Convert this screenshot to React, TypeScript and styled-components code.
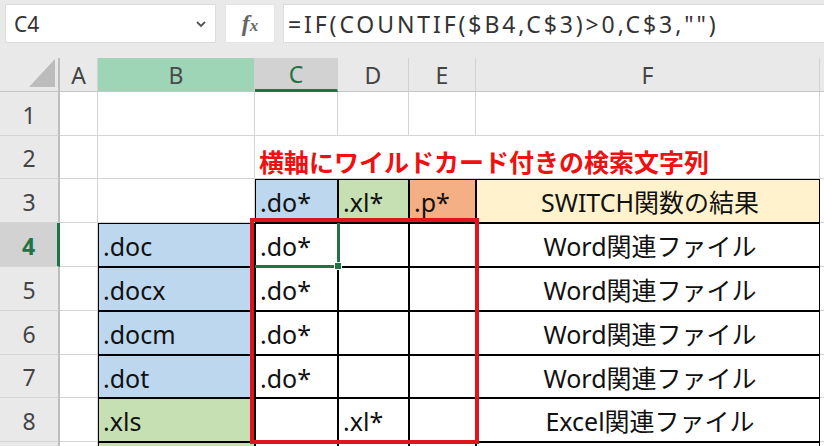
import React from 'react';
import styled, { createGlobalStyle, css } from 'styled-components';

const GlobalStyle = createGlobalStyle`
  html, body {
    margin: 0;
    padding: 0;
    background: #ffffff;
  }
  body {
    font-family: 'Noto Sans', 'Noto Sans CJK JP', sans-serif;
  }
`;

const GREEN = '#217346';

const Page = styled.div`
  width: 824px;
  height: 446px;
  overflow: hidden;
  background: #fff;
`;

const FormulaBar = styled.div`
  display: flex;
  align-items: flex-start;
  gap: 9px;
  height: 58px;
  padding: 4px 0 0 5px;
  box-sizing: border-box;
  background: #e9e9e9;
`;

const NameBox = styled.div`
  width: 211px;
  height: 39px;
  box-sizing: border-box;
  background: #fff;
  border: 1px solid #dcdcdc;
  display: flex;
  align-items: center;
  justify-content: space-between;
  padding: 0 8px 0 8px;
  font-size: 21px;
  color: #333;
`;

const FxBox = styled.div`
  width: 50px;
  height: 39px;
  box-sizing: border-box;
  background: #fff;
  border: 1px solid #e4e4e4;
  display: flex;
  align-items: center;
  justify-content: center;
  font-family: 'Liberation Serif', 'DejaVu Serif', serif;
  font-style: italic;
  font-weight: bold;
  color: #666;
  margin-right: -1px;

  b {
    font-size: 24px;
  }
  small {
    font-size: 17px;
    margin-top: 5px;
  }
`;

const FormulaInput = styled.div`
  flex: 1;
  height: 39px;
  box-sizing: border-box;
  background: #fff;
  border: 1px solid #dcdcdc;
  border-right: none;
  display: flex;
  align-items: center;
  padding-left: 4px;
  font-size: 23px;
  letter-spacing: 2.9px;
  color: #333;
  white-space: nowrap;
`;

const Sheet = styled.div`
  display: grid;
  grid-template-columns: 60px 38px 157px 83px 71px 67px 344px 1fr;
  grid-template-rows: 34px 44px 43px 44px 44px 44px 44px 43px 44px 44px;
`;

const Corner = styled.div`
  grid-row: 1;
  grid-column: 1;
  background: #e9e9e9;
  border-right: 2px solid #bdbdbd;
  border-bottom: 1px solid #c6c6c6;
  box-sizing: border-box;
  display: flex;
  align-items: flex-end;
  justify-content: flex-end;
  padding: 0 3px 4px 0;
`;

type HeadState = 'normal' | 'range' | 'active';

const ColHeader = styled.div<{ $c: number; $state: HeadState }>`
  grid-row: 1;
  grid-column: ${(p) => p.$c};
  display: flex;
  align-items: center;
  justify-content: center;
  box-sizing: border-box;
  font-size: 23px;
  color: #444;
  background: #e9e9e9;
  border-right: 1px solid #d2d2d2;
  border-bottom: 1px solid #c6c6c6;
  padding-top: 1px;
  ${(p) =>
    p.$state === 'range' &&
    css`
      background: #9fd5b7;
      color: #4a4a4a;
    `}
  ${(p) =>
    p.$state === 'active' &&
    css`
      background: #d2d2d2;
      color: ${GREEN};
      border-bottom: 3px solid ${GREEN};
    `}
`;

const RowHeader = styled.div<{ $r: number; $active?: boolean }>`
  grid-row: ${(p) => p.$r};
  grid-column: 1;
  display: flex;
  align-items: center;
  justify-content: center;
  box-sizing: border-box;
  font-size: 23px;
  color: #444;
  background: #e9e9e9;
  border-right: 2px solid #bdbdbd;
  border-bottom: 1px solid #d4d4d4;
  padding-top: 2px;
  ${(p) =>
    p.$active &&
    css`
      background: #d2d2d2;
      color: ${GREEN};
      font-weight: bold;
      border-right: 3px solid ${GREEN};
    `}
`;

const Cell = styled.div<{
  $r: number;
  $c: number;
  $span?: number;
  $bg?: string;
  $center?: boolean;
  $boxed?: boolean;
}>`
  grid-row: ${(p) => p.$r};
  grid-column: ${(p) => p.$c} / span ${(p) => p.$span || 1};
  box-sizing: border-box;
  display: flex;
  align-items: flex-start;
  justify-content: ${(p) => (p.$center ? 'center' : 'flex-start')};
  padding: 11px 0 0 5px;
  font-family: 'Noto Sans', 'Noto Sans CJK JP', sans-serif;
  font-size: 25px;
  line-height: 25px;
  color: #111;
  white-space: nowrap;
  background: ${(p) => p.$bg || '#fff'};
  border-right: 1px solid #d4d4d4;
  border-bottom: 1px solid #d4d4d4;
  ${(p) =>
    p.$boxed &&
    css`
      border-right-color: #000;
      border-bottom-color: #000;
      box-shadow: inset 1px 1px 0 #000;
    `}
`;

const Title = styled(Cell)`
  padding-top: 13px;
  padding-left: 4px;
  font-family: 'Noto Sans CJK JP', sans-serif;
  font-weight: bold;
  color: #ee1111;
`;

const RedFrame = styled.div`
  grid-row: 5 / 10;
  grid-column: 4 / 7;
  margin: -5px -3px -2px -5px;
  border: 4px solid #e0141e;
  z-index: 2;
  pointer-events: none;
`;

const Selection = styled.div`
  grid-row: 5;
  grid-column: 4;
  margin: 0 -2px -1px 0;
  border-right: 3px solid ${GREEN};
  border-bottom: 3px solid ${GREEN};
  position: relative;
  z-index: 1;
  pointer-events: none;

  &::after {
    content: '';
    position: absolute;
    right: -5px;
    bottom: -5px;
    width: 6px;
    height: 6px;
    background: ${GREEN};
    border: 1px solid #fff;
  }
`;

const BLUE = '#bdd7ee';
const LIME = '#c6e0b4';
const ORANGE = '#f4b084';
const CREAM = '#fff2cc';

type CellDef = { text?: string; bg?: string; center?: boolean; boxed?: boolean };

const cols = ['A', 'B', 'C', 'D', 'E', 'F', ''];

// row 9 is cut off by the window, only its fills show
const dataRows: { ext?: string; bg: string; c?: string; d?: string; result?: string }[] = [
  { ext: '.doc', bg: BLUE, c: '.do*', result: 'Word関連ファイル' },
  { ext: '.docx', bg: BLUE, c: '.do*', result: 'Word関連ファイル' },
  { ext: '.docm', bg: BLUE, c: '.do*', result: 'Word関連ファイル' },
  { ext: '.dot', bg: BLUE, c: '.do*', result: 'Word関連ファイル' },
  { ext: '.xls', bg: LIME, d: '.xl*', result: 'Excel関連ファイル' },
  { bg: LIME },
];

function buildRow(n: number): CellDef[] {
  if (n === 1) return [{}, {}, {}, {}, {}, {}, {}];
  if (n === 3)
    return [
      {},
      {},
      { text: '.do*', bg: BLUE, boxed: true },
      { text: '.xl*', bg: LIME, boxed: true },
      { text: '.p*', bg: ORANGE, boxed: true },
      { text: 'SWITCH関数の結果', bg: CREAM, center: true, boxed: true },
      {},
    ];
  const d = dataRows[n - 4];
  return [
    {},
    { text: d.ext, bg: d.bg, boxed: true },
    { text: d.c, boxed: true },
    { text: d.d, boxed: true },
    { boxed: true },
    { text: d.result, center: true, boxed: true },
    {},
  ];
}

function Chevron() {
  return (
    <svg width="12" height="8" viewBox="0 0 12 8">
      <path d="M2 2 L6 6 L10 2" fill="none" stroke="#555" strokeWidth="1.8" />
    </svg>
  );
}

function CornerMark() {
  return (
    <svg width="26" height="28" viewBox="0 0 26 28">
      <polygon points="26,0 26,28 0,28" fill="#bcbcbc" />
    </svg>
  );
}

export default function App() {
  const rowNums = [1, 2, 3, 4, 5, 6, 7, 8, 9];

  return (
    <Page>
      <GlobalStyle />
      <FormulaBar>
        <NameBox>
          <span>C4</span>
          <Chevron />
        </NameBox>
        <FxBox>
          <b>f</b>
          <small>x</small>
        </FxBox>
        <FormulaInput>=IF(COUNTIF($B4,C$3)&gt;0,C$3,"")</FormulaInput>
      </FormulaBar>

      <Sheet>
        <Corner>
          <CornerMark />
        </Corner>
        {cols.map((c, i) => (
          <ColHeader key={c || 'g'} $c={i + 2} $state={c === 'B' ? 'range' : c === 'C' ? 'active' : 'normal'}>
            {c}
          </ColHeader>
        ))}

        {rowNums.map((n) => (
          <React.Fragment key={n}>
            <RowHeader $r={n + 1} $active={n === 4}>
              {n < 9 ? n : ''}
            </RowHeader>
            {n === 2 ? (
              <>
                <Cell $r={3} $c={2} />
                <Cell $r={3} $c={3} />
                <Title $r={3} $c={4} $span={4}>
                  横軸にワイルドカード付きの検索文字列
                </Title>
                <Cell $r={3} $c={8} />
              </>
            ) : (
              buildRow(n).map((cell, i) => (
                <Cell
                  key={i}
                  $r={n + 1}
                  $c={i + 2}
                  $bg={cell.bg}
                  $center={cell.center}
                  $boxed={cell.boxed}
                >
                  {cell.text}
                </Cell>
              ))
            )}
          </React.Fragment>
        ))}

        <Selection />
        <RedFrame />
      </Sheet>
    </Page>
  );
}
